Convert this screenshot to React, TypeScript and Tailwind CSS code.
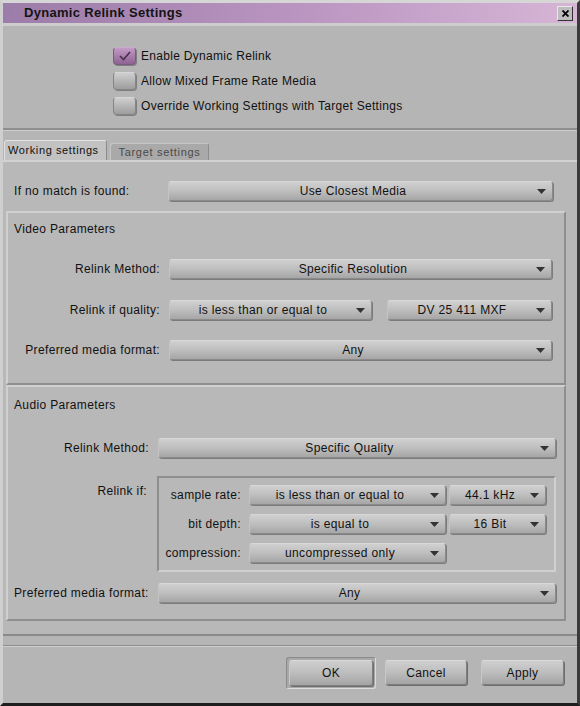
import React from 'react';

const font = { fontFamily: '"Liberation Sans", Arial, sans-serif' };

const Arrow = () => (
  <svg width="9" height="5" viewBox="0 0 9 5" className="shrink-0">
    <path d="M0 0 H9 L4.5 5 Z" fill="#333" />
  </svg>
);

interface DropProps {
  text: string;
  className?: string;
}

const Dropdown: React.FC<DropProps> = ({ text, className = '' }) => (
  <div
    className={`flex h-[20px] items-center rounded-[3px] border border-[#8a8a8a] border-l-[#c4c4c4] border-t-[#d8d8d8] bg-gradient-to-b from-[#d0d0d0] via-[#bebebe] to-[#a6a6a6] pr-[6px] shadow-[1px_1px_0_#7c7c7c] ${className}`}
  >
    <span className="flex-1 text-center text-[12px] leading-none tracking-[0.35px] text-[#111]">{text}</span>
    <Arrow />
  </div>
);

const Checkbox: React.FC<{ checked?: boolean; label: string }> = ({ checked, label }) => (
  <div className="flex h-[25px] items-center">
    <div
      className={`flex h-[18px] w-[23px] items-center justify-center rounded-[4px] border ${
        checked
          ? 'border-[#7a5a7e] border-t-[#caaacd] bg-gradient-to-b from-[#c39bc6] to-[#8e6392]'
          : 'border-[#858585] border-t-[#d6d6d6] bg-gradient-to-b from-[#cfcfcf] to-[#9d9d9d]'
      } shadow-[1px_1px_0_#7e7e7e]`}
    >
      {checked && (
        <svg width="12" height="10" viewBox="0 0 12 10">
          <path d="M1 5 L4.5 8.5 L11 1" stroke="#4a2f4d" strokeWidth="1.6" fill="none" />
        </svg>
      )}
    </div>
    <span className="ml-[5px] text-[12px] tracking-[0.3px] text-[#111]">{label}</span>
  </div>
);

const Button: React.FC<{ label: string; className?: string }> = ({ label, className = '' }) => (
  <div
    className={`flex h-[25px] items-center justify-center rounded-[3px] border border-[#7e7e7e] border-l-[#c8c8c8] border-t-[#dadada] bg-gradient-to-b from-[#cfcfcf] via-[#bdbdbd] to-[#a4a4a4] text-[12px] tracking-[0.35px] text-[#111] shadow-[1px_1px_0_#6e6e6e] ${className}`}
  >
    {label}
  </div>
);

const label = 'text-[12px] tracking-[0.35px] text-[#111]';

export default function App() {
  return (
    <div
      className="flex h-[706px] w-[580px] flex-col border-b-[3px] border-l-[3px] border-r-[3px] border-t-[3px] border-b-[#1e1e1e] border-l-[#cfcfcf] border-r-[#3a3a3a] border-t-[#d6d6d6] bg-[#b5b5b5]"
      style={font}
    >
      {/* Title bar */}
      <div className="flex h-[20px] shrink-0 items-center bg-gradient-to-r from-[#9c7ca9] via-[#b994c0] to-[#d6b5d6] pl-[21px] pr-[4px]">
        <span className="flex-1 text-[13px] font-bold tracking-[0.3px] text-[#141414]">Dynamic Relink Settings</span>
        <div className="flex h-[15px] w-[16px] items-center justify-center border border-[#e6e6e6] border-b-[#333] border-r-[#333] bg-[#bdbdbd]">
          <svg width="7" height="7" viewBox="0 0 7 7">
            <path d="M0.5 0.5 L6.5 6.5 M6.5 0.5 L0.5 6.5" stroke="#000" strokeWidth="1.8" />
          </svg>
        </div>
      </div>

      {/* Checkboxes */}
      <div className="flex h-[105px] shrink-0 flex-col border-t-[3px] border-t-[#cdcdcd] pl-[110px] pt-[17px]">
        <Checkbox checked label="Enable Dynamic Relink" />
        <Checkbox label="Allow Mixed Frame Rate Media" />
        <Checkbox label="Override Working Settings with Target Settings" />
      </div>

      <div className="h-[3px] shrink-0 border-b border-t-2 border-b-[#cdcdcd] border-t-[#8e8e8e]" />

      {/* Tabs */}
      <div className="mt-[10px] flex h-[19px] shrink-0 items-end pl-[1px]">
        <div className="flex h-[20px] w-[103px] items-center rounded-t-[3px] border-l border-r border-t border-l-[#e0e0e0] border-r-[#8c8c8c] border-t-[#e4e4e4] bg-[#c2c2c2] pl-[3px] text-[11px] tracking-[0.6px] text-[#111]">
          Working settings
        </div>
        <div className="ml-[3px] flex h-[17px] w-[99px] items-center justify-center rounded-t-[3px] border-l border-r border-t border-l-[#c6c6c6] border-r-[#8c8c8c] border-t-[#c6c6c6] bg-[#a9a9a9] text-[11px] tracking-[0.7px] text-[#4a4a4a]">
          Target settings
        </div>
      </div>

      {/* Tab panel */}
      <div className="flex h-[476px] shrink-0 flex-col border-b-2 border-t-2 border-b-[#8a8a8a] border-t-[#d2d2d2] bg-[#b8b8b8]">
        <div className="mt-[19px] flex h-[20px] items-center">
          <span className={`ml-[11px] w-[154px] ${label}`}>If no match is found:</span>
          <Dropdown text="Use Closest Media" className="w-[385px]" />
        </div>

        {/* Video parameters */}
        <div className="ml-[3px] mt-[10px] flex h-[174px] w-[560px] flex-col border-2 border-b-[#8e8e8e] border-l-[#d0d0d0] border-r-[#8e8e8e] border-t-[#d0d0d0]">
          <div className={`ml-[6px] mt-[9px] h-[14px] leading-[14px] ${label}`}>Video Parameters</div>
          <div className="mt-[23px] flex h-[20px] items-center">
            <span className={`w-[154px] pr-[2px] text-right ${label}`}>Relink Method:</span>
            <Dropdown text="Specific Resolution" className="ml-[7px] w-[383px]" />
          </div>
          <div className="mt-[21px] flex h-[20px] items-center">
            <span className={`w-[154px] pr-[2px] text-right ${label}`}>Relink if quality:</span>
            <Dropdown text="is less than or equal to" className="ml-[7px] w-[203px]" />
            <Dropdown text="DV 25 411  MXF" className="ml-[15px] w-[165px]" />
          </div>
          <div className="mt-[20px] flex h-[20px] items-center">
            <span className={`w-[154px] pr-[2px] text-right ${label}`}>Preferred media format:</span>
            <Dropdown text="Any" className="ml-[7px] w-[383px]" />
          </div>
        </div>

        {/* Audio parameters */}
        <div className="ml-[3px] flex h-[236px] w-[560px] flex-col border-2 border-b-[#8e8e8e] border-l-[#d0d0d0] border-r-[#8e8e8e] border-t-[#d0d0d0]">
          <div className={`ml-[6px] mt-[11px] h-[14px] leading-[14px] ${label}`}>Audio Parameters</div>
          <div className="mt-[26px] flex h-[20px] items-center">
            <span className={`w-[143px] pr-[2px] text-right ${label}`}>Relink Method:</span>
            <Dropdown text="Specific Quality" className="ml-[7px] w-[398px]" />
          </div>
          <div className="mt-[18px] flex">
            <span className={`mt-[6px] w-[139px] text-right ${label}`}>Relink if:</span>
            <div className="ml-[10px] flex h-[96px] w-[399px] flex-col border-2 border-b-[#d0d0d0] border-l-[#8e8e8e] border-r-[#d0d0d0] border-t-[#8e8e8e] pt-[7px]">
              <div className="flex h-[20px] items-center">
                <span className={`w-[82px] text-right ${label}`}>sample rate:</span>
                <Dropdown text="is less than or equal to" className="ml-[8px] w-[197px]" />
                <Dropdown text="44.1 kHz" className="ml-[3px] w-[97px]" />
              </div>
              <div className="mt-[9px] flex h-[20px] items-center">
                <span className={`w-[82px] text-right ${label}`}>bit depth:</span>
                <Dropdown text="is equal to" className="ml-[8px] w-[197px]" />
                <Dropdown text="16 Bit" className="ml-[3px] w-[97px]" />
              </div>
              <div className="mt-[9px] flex h-[20px] items-center">
                <span className={`w-[82px] text-right ${label}`}>compression:</span>
                <Dropdown text="uncompressed only" className="ml-[8px] w-[197px]" />
              </div>
            </div>
          </div>
          <div className="mt-[11px] flex h-[20px] items-center">
            <span className={`ml-[6px] w-[144px] ${label}`}>Preferred media format:</span>
            <Dropdown text="Any" className="w-[398px]" />
          </div>
        </div>
      </div>

      <div className="mt-[9px] h-[2px] shrink-0 border-b border-t border-b-[#d0d0d0] border-t-[#8e8e8e]" />

      {/* Buttons */}
      <div className="flex flex-1 items-start pl-[283px] pt-[10px]">
        <div className="flex h-[32px] w-[90px] items-center justify-center rounded-[3px] border border-[#8a8a8a] border-b-[#dcdcdc] border-r-[#dcdcdc] bg-[#a8a8a8] p-[2px]">
          <Button label="OK" className="h-[26px] w-full" />
        </div>
        <Button label="Cancel" className="ml-[9px] mt-[3px] w-[82px]" />
        <Button label="Apply" className="ml-[14px] mt-[3px] w-[83px]" />
      </div>
    </div>
  );
}
